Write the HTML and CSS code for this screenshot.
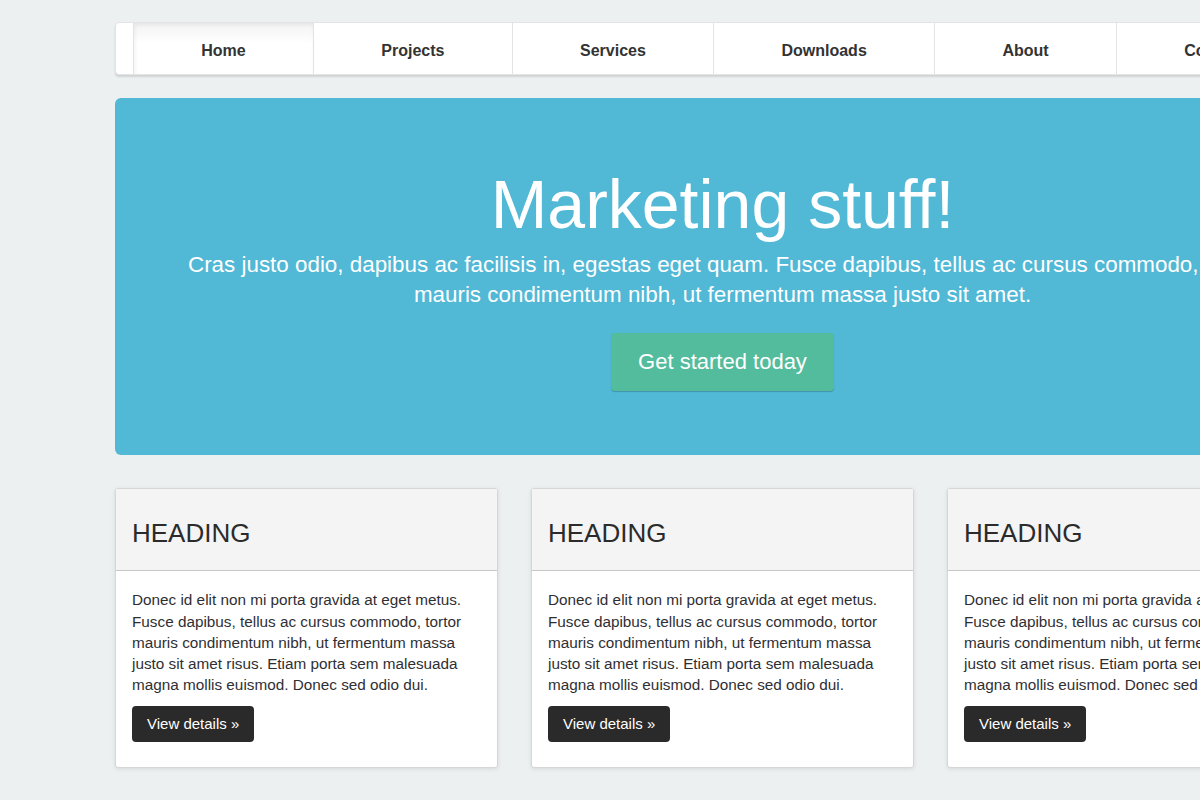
FILE: index.html
```html
<!DOCTYPE html>
<html lang="en">
<head>
  <meta charset="UTF-8" />
  <meta name="viewport" content="width=device-width, initial-scale=1.0" />
  <title>Marketing stuff</title>
  <link rel="stylesheet" href="styles.css">
</head>
<body>
  <div class="container">
    <!-- Main navigation -->
    <ul class="nav">
      <li class="active"><a href="#">Home</a></li>
      <li><a href="#">Projects</a></li>
      <li><a href="#">Services</a></li>
      <li><a href="#">Downloads</a></li>
      <li><a href="#">About</a></li>
      <li><a href="#">Contact</a></li>
    </ul>

    <!-- Jumbotron -->
    <div class="jumbotron">
      <h1>Marketing stuff!</h1>
      <p class="lead">Cras justo odio, dapibus ac facilisis in, egestas eget quam. Fusce dapibus, tellus ac cursus commodo, tortor mauris condimentum nibh, ut fermentum massa justo sit amet.</p>
      <a class="btn-success" href="#">Get started today</a>
    </div>

    <!-- Example row of columns -->
    <div class="row">
      <div class="panel">
        <div class="panel-heading"><h2>HEADING</h2></div>
        <div class="panel-body">
          <p>Donec id elit non mi porta gravida at eget metus. Fusce dapibus, tellus ac cursus commodo, tortor mauris condimentum nibh, ut fermentum massa justo sit amet risus. Etiam porta sem malesuada magna mollis euismod. Donec sed odio dui.</p>
          <a class="btn-dark" href="#">View details &raquo;</a>
        </div>
      </div>
      <div class="panel">
        <div class="panel-heading"><h2>HEADING</h2></div>
        <div class="panel-body">
          <p>Donec id elit non mi porta gravida at eget metus. Fusce dapibus, tellus ac cursus commodo, tortor mauris condimentum nibh, ut fermentum massa justo sit amet risus. Etiam porta sem malesuada magna mollis euismod. Donec sed odio dui.</p>
          <a class="btn-dark" href="#">View details &raquo;</a>
        </div>
      </div>
      <div class="panel">
        <div class="panel-heading"><h2>HEADING</h2></div>
        <div class="panel-body">
          <p>Donec id elit non mi porta gravida at eget metus. Fusce dapibus, tellus ac cursus commodo, tortor mauris condimentum nibh, ut fermentum massa justo sit amet risus. Etiam porta sem malesuada magna mollis euismod. Donec sed odio dui.</p>
          <a class="btn-dark" href="#">View details &raquo;</a>
        </div>
      </div>
    </div>
  </div>
</body>
</html>
```

FILE: styles.css
```css
/* Global styles */
html, body {
  overflow: hidden;
}
body {
  margin: 0;
  background: #ecf0f1;
  color: #333;
  font-family: "Liberation Sans", Arial, sans-serif;
  font-size: 15px;
}
a {
  text-decoration: none;
}
.container {
  width: 1215px;
  padding: 22px 0 30px 115px;
}
/* Navigation */
.nav {
  display: flex;
  margin: 0 0 23px;
  padding: 0 17px;
  list-style: none;
  background: #fff;
  border: 1px solid #e2e4e5;
  border-radius: 4px;
  box-shadow: 0 2px 2px rgba(0,0,0,0.12);
}
.nav li {
  flex: 1 1 auto;
  border-left: 1px solid #e3e3e3;
}
.nav li:last-child {
  border-right: 1px solid #e3e3e3;
}
.nav a {
  display: block;
  padding: 0 20px;
  height: 51px;
  line-height: 55px;
  text-align: center;
  font-size: 16px;
  font-weight: bold;
  color: #333;
}
.nav li.active a {
  background: linear-gradient(#f3f3f3, #fff 40%);
  box-shadow: inset 1px 2px 4px rgba(0,0,0,0.06);
}
/* Jumbotron */
.jumbotron {
  padding: 69px 60px 64px;
  margin-bottom: 33px;
  background: #51b8d6;
  border-radius: 6px;
  color: #fff;
  text-align: center;
}
.jumbotron h1 {
  margin: 0;
  font-size: 68px;
  font-weight: normal;
  line-height: 1.1;
}
.jumbotron .lead {
  margin: 8px 0 23px;
  font-size: 22.4px;
  line-height: 30px;
}
.btn-success {
  display: inline-block;
  padding: 0 27px;
  height: 58px;
  line-height: 58px;
  font-size: 22px;
  color: #fff;
  background: #52bc9c;
  border-radius: 4px;
  box-shadow: 0 1px 1px rgba(0,0,0,0.2);
}
/* Columns */
.row {
  display: grid;
  grid-template-columns: repeat(3, 1fr);
  gap: 33px;
}
.panel {
  background: #fff;
  border: 1px solid #d6d6d6;
  border-radius: 3px;
  box-shadow: 0 1px 4px rgba(0,0,0,0.1);
}
.panel-heading {
  padding: 30px 16px 23px;
  background: #f4f4f4;
  border-bottom: 1px solid #c6c6c6;
}
.panel-heading h2 {
  margin: 0;
  font-size: 26px;
  font-weight: normal;
  line-height: 1.1;
  color: #2b2b2b;
}
.panel-body {
  padding: 18px 16px 25px;
}
.panel-body p {
  margin: 0 0 11px;
  font-size: 15.3px;
  line-height: 21.2px;
  color: #2f2f33;
}
.btn-dark {
  display: inline-block;
  padding: 0 15px;
  height: 36px;
  line-height: 36px;
  font-size: 15px;
  color: #fff;
  background: #2a2a2a;
  border-radius: 4px;
}
```
